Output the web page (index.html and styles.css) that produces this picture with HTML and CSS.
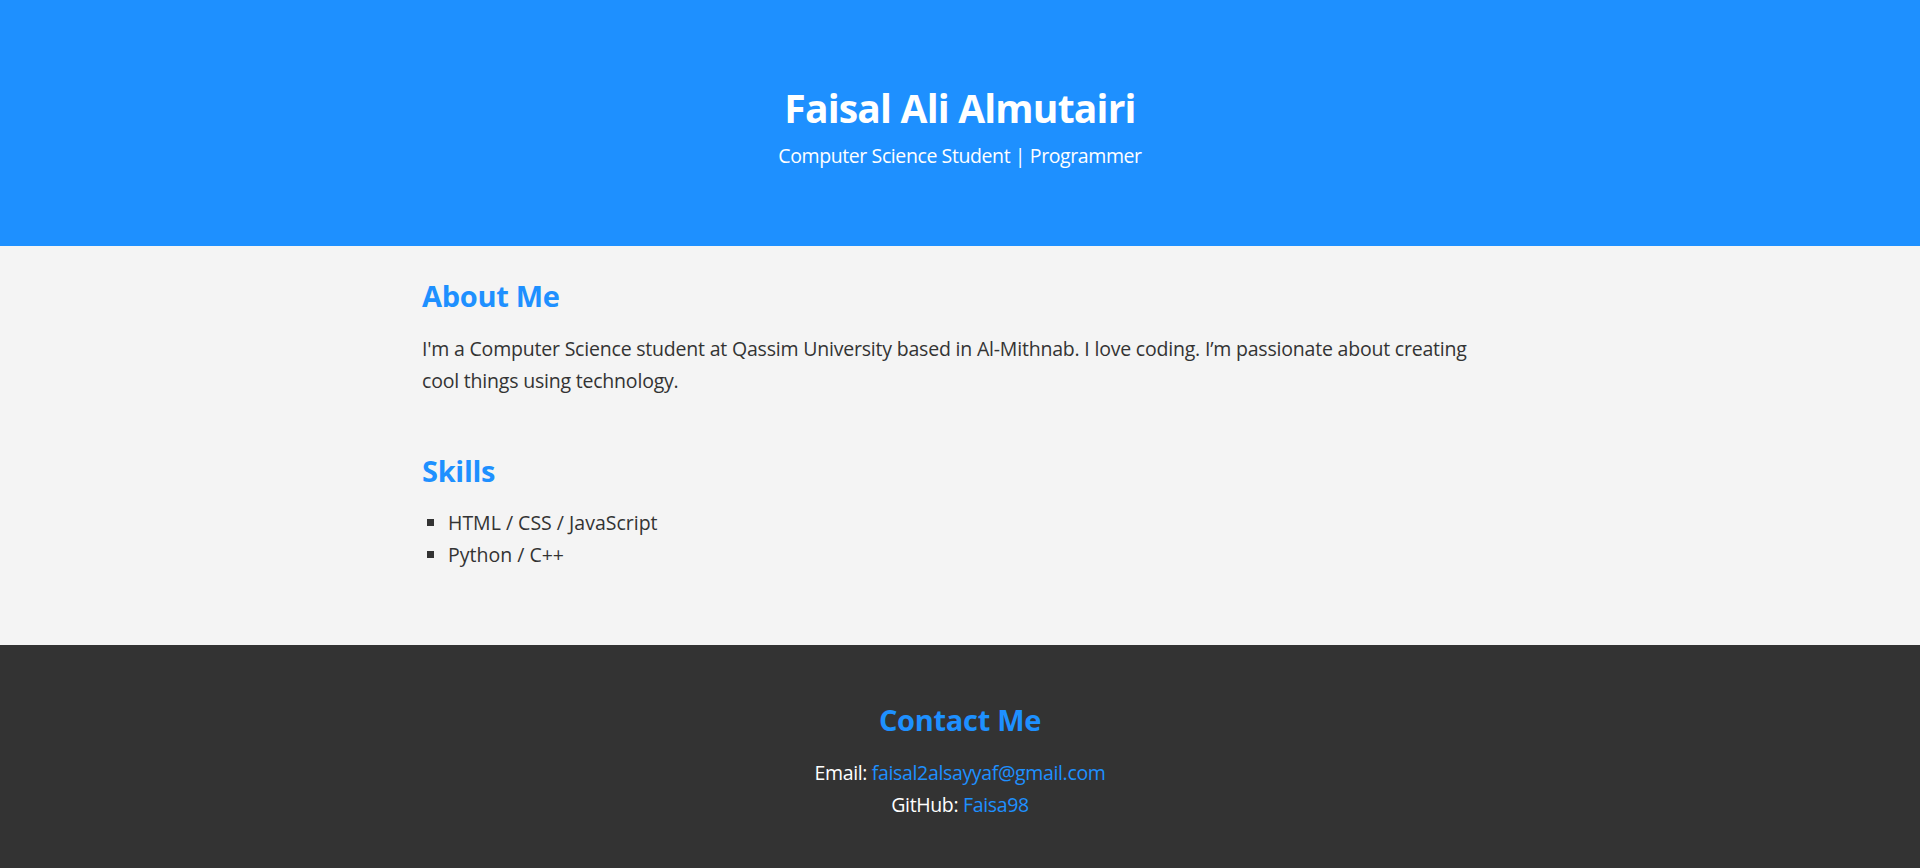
FILE: index.html
```html
<!DOCTYPE html>
<html lang="en">
<head>
<meta charset="utf-8">
<title>Faisal Ali Almutairi</title>
<link rel="stylesheet" href="styles.css">
</head>
<body>
<header class="hero">
  <h1 class="hero-title">Faisal Ali Almutairi</h1>
  <p class="hero-sub">Computer Science Student | Programmer</p>
</header>
<main class="content">
  <section class="block about">
    <h2 class="block-title">About Me</h2>
    <p class="text">I'm a Computer Science student at Qassim University based in Al-Mithnab. I love coding. I’m passionate about creating cool things using technology.</p>
  </section>
  <section class="block skills">
    <h2 class="block-title">Skills</h2>
    <ul class="skill-list">
      <li>HTML / CSS / JavaScript</li>
      <li>Python / C++</li>
    </ul>
  </section>
</main>
<footer class="contact">
  <h2 class="block-title">Contact Me</h2>
  <p class="text">Email: <a href="mailto:faisal2alsayyaf@gmail.com">faisal2alsayyaf@gmail.com</a></p>
  <p class="text">GitHub: <a href="#">Faisa98</a></p>
</footer>
</body>
</html>
```
FILE: styles.css
```css
* { box-sizing: border-box; }
html, body { margin: 0; padding: 0; }
body {
  font-family: "Open Sans", "Noto Sans", sans-serif;
  color: #333;
  background: #f4f4f4;
}
.hero {
  background: #1e90ff;
  color: #fff;
  text-align: center;
  height: 246px;
  padding-top: 84px;
}
.hero-title {
  margin: 0;
  font-size: 39px;
  line-height: 48px;
  font-weight: 700;
  letter-spacing: -0.8px;
}
.hero-sub {
  margin: 8px 0 0;
  font-size: 19.5px;
  line-height: 32px;
  letter-spacing: -0.4px;
}
.content {
  width: 1076px;
  margin: 0 auto;
  height: 399px;
  padding-top: 32px;
}
.block-title {
  margin: 0;
  font-size: 29px;
  line-height: 36px;
  font-weight: 700;
  letter-spacing: -0.3px;
  color: #1e90ff;
}
.text {
  margin: 0;
  font-size: 19.5px;
  line-height: 32px;
  letter-spacing: -0.35px;
}
.about .text {
  margin-top: 19px;
  letter-spacing: -0.2px;
}
.skills { margin-top: 56px; }
.skill-list {
  margin: 18px 0 0;
  padding-left: 26px;
  list-style: square;
  font-size: 19.5px;
  line-height: 32px;
}
.contact {
  background: #333;
  color: #fff;
  text-align: center;
  height: 223px;
  padding-top: 57px;
}
.contact .block-title { margin-bottom: 19px; }
.contact a {
  color: #1e90ff;
  text-decoration: none;
}
```
